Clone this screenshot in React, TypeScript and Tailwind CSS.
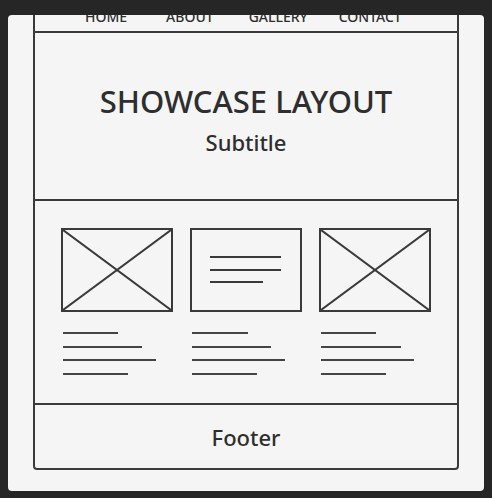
const navItems = [
  { label: 'HOME', ml: 'ml-[50px]' },
  { label: 'ABOUT', ml: 'ml-[39px]' },
  { label: 'GALLERY', ml: 'ml-[35px]' },
  { label: 'CONTACT', ml: 'ml-[31px]' },
];

const cards = [
  { kind: 'image', lines: [55, 79, 93, 65] },
  { kind: 'text', lines: [56, 79, 93, 65] },
  { kind: 'image', lines: [55, 80, 93, 65] },
];

function ImageBox() {
  return (
    <div className="w-[112px] h-[84px] border-2 border-[#3a3a3a]">
      <svg viewBox="0 0 108 80" preserveAspectRatio="none" className="w-full h-full block">
        <line x1="0" y1="0" x2="108" y2="80" stroke="#3a3a3a" strokeWidth="2" />
        <line x1="108" y1="0" x2="0" y2="80" stroke="#3a3a3a" strokeWidth="2" />
      </svg>
    </div>
  );
}

function TextBox() {
  return (
    <div className="w-[112px] h-[84px] border-2 border-[#3a3a3a] flex flex-col gap-[10.5px] pt-[26px] pl-[18px]">
      <div className="h-[2px] w-[71px] bg-[#3a3a3a]" />
      <div className="h-[2px] w-[71px] bg-[#3a3a3a]" />
      <div className="h-[2px] w-[53px] bg-[#3a3a3a]" />
    </div>
  );
}

export default function App() {
  return (
    <div
      className="w-full h-[498px] bg-[#262626] pt-[15px] px-[8px] pb-[7px]"
      style={{ fontFamily: '"Noto Sans", "Open Sans", sans-serif' }}
    >
      <div className="h-[476px] bg-[#f5f5f5] rounded-[4px] overflow-hidden px-[25px]">
        {/* scrolled wireframe */}
        <div className="-mt-[14px] border-2 border-[#3a3a3a] rounded-b-[4px] text-[#2e2e2e] font-medium">
          <nav className="h-[30px] border-b-2 border-[#3a3a3a] flex items-center text-[14px]">
            {navItems.map((item) => (
              <span key={item.label} className={`leading-none ${item.ml}`}>{item.label}</span>
            ))}
          </nav>

          <section className="h-[168px] border-b-2 border-[#3a3a3a] flex flex-col items-center pt-[52px]">
            <h1 className="text-[31px] leading-[32px]">SHOWCASE LAYOUT</h1>
            <p className="text-[22px] leading-[22px] mt-[14px]">Subtitle</p>
          </section>

          <section className="h-[204px] border-b-2 border-[#3a3a3a] flex justify-center gap-[17px] pt-[27px]">
            {cards.map((card, i) => (
              <div key={i} className="flex flex-col">
                {card.kind === 'image' ? <ImageBox /> : <TextBox />}
                <div className="flex flex-col gap-[11.5px] mt-[20px] pl-[2px]">
                  {card.lines.map((w, j) => (
                    <div key={j} className="h-[2px] bg-[#444]" style={{ width: w }} />
                  ))}
                </div>
              </div>
            ))}
          </section>

          <footer className="h-[63px] flex items-center justify-center">
            <span className="text-[22px] leading-none">Footer</span>
          </footer>
        </div>
      </div>
    </div>
  );
}
